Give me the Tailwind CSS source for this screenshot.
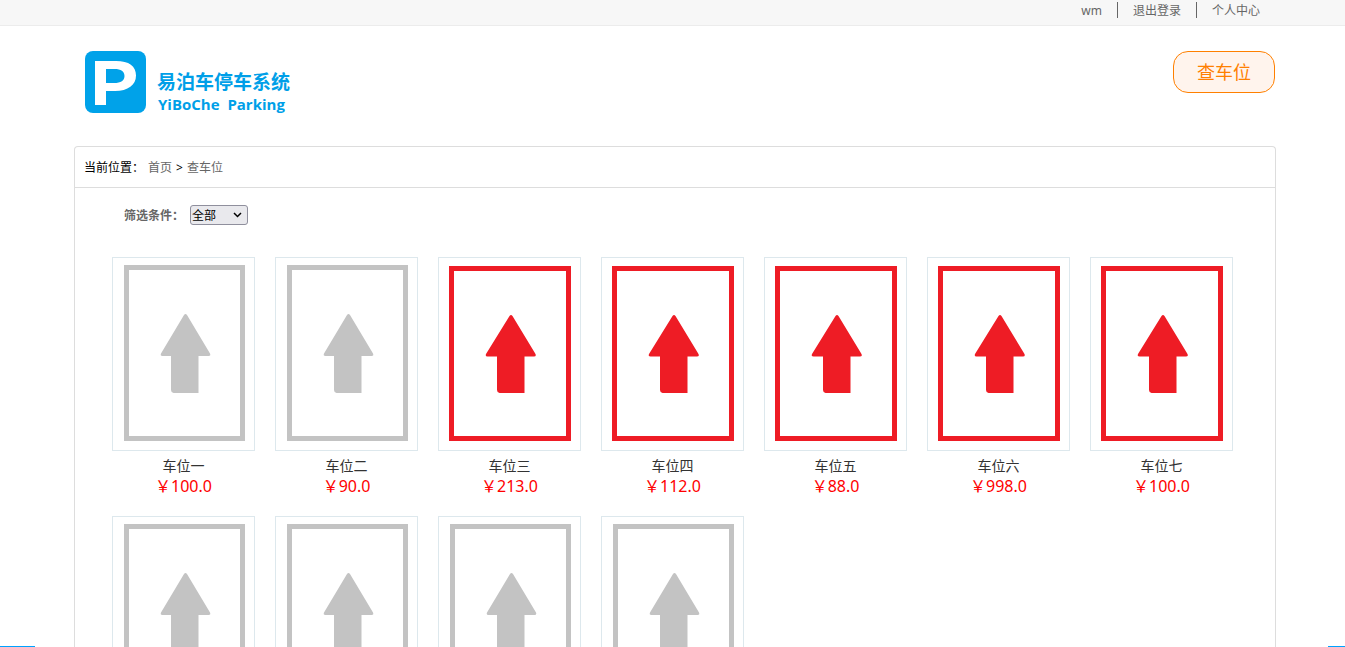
<!DOCTYPE html>
<html lang="zh-CN">
<head>
<meta charset="utf-8">
<meta name="viewport" content="width=device-width, initial-scale=1">
<title>易泊车停车系统</title>
<script src="https://cdn.jsdelivr.net/npm/@tailwindcss/browser@4"></script>
</head>
<body class="min-h-screen bg-white font-['Noto_Sans','Noto_Sans_CJK_SC',sans-serif] text-xs text-black">
<svg class="hidden" aria-hidden="true">
  <symbol id="free" viewBox="0 0 141 192">
    <rect x="13.5" y="9.5" width="116" height="171" fill="none" stroke="#c3c3c3" stroke-width="5"/>
    <path d="M71 57q1.500-2 3 0L97 95.500q1 2.500-1.500 2.500H85.500v37H60.500q-2.500-.5-2.500-3V98H49.500q-2.500 0-1.500-2.500z" fill="#c3c3c3"/>
  </symbol>
  <symbol id="taken" viewBox="0 0 141 192">
    <rect x="12.500" y="10.500" width="117" height="170" fill="none" stroke="#ee1c25" stroke-width="5"/>
    <path d="M70.500 58q1.500-2 3 0L96.500 96q1 2.500-1.500 2.500H85.500V135H60.500q-2.500-.5-2.500-3V98.500H48.500q-2.500 0-1.500-2.500z" fill="#ee1c25"/>
  </symbol>
</svg>

<div class="h-[26px] border-b border-[#ececec] bg-[#f7f7f7] pl-[5px]">
  <nav class="mx-auto flex max-w-[1202px] justify-end pt-0.5 pr-px leading-[18px] text-[#666]">
    <a href="#" class="h-4 border-r border-[#666] px-[15px]">wm</a>
    <a href="#" class="h-4 border-r border-[#666] px-[15px]">退出登录</a>
    <a href="#" class="h-4 px-[15px]">个人中心</a>
  </nav>
</div>

<div class="pl-[5px]">
  <header class="mx-auto flex h-[120px] max-w-[1202px] items-start justify-between pt-[25px]">
    <a href="#" class="flex pl-[11px] text-[#009fe8]" aria-label="易泊车停车系统">
      <svg class="h-[62px] w-[61px] shrink-0" viewBox="0 0 61 62">
        <rect width="61" height="62" rx="8" fill="#00a2e9"/>
        <path fill="#fff" fill-rule="evenodd" d="M10 10H31C44 10 51 15 51 24.500C51 34 43 40 30 40H21V54H10zM21 18V32H29C36 32 39.500 29.500 39.500 25C39.500 20.500 36 18 29.500 18z"/>
      </svg>
      <span class="block pl-[11px] pt-[20px] font-bold">
        <span class="block text-[19px] leading-[22px]">易泊车停车系统</span>
        <span class="block whitespace-pre pl-px text-[15px] font-['Open_Sans','Noto_Sans',sans-serif] leading-[22px]">YiBoChe  Parking</span>
      </span>
    </a>
    <button type="button" class="mr-px h-[42px] w-[102px] rounded-[15px] border border-[#ff8000] bg-[#fff4ed] text-lg text-[#ff8000]">查车位</button>
  </header>

  <main class="mx-auto max-w-[1202px] rounded-t border border-b-0 border-[#ddd]">
    <div class="flex h-[41px] items-center gap-1 border-b border-[#ddd] pt-0.5 pl-[9px]">
      <span>当前位置：</span><a href="#" class="text-[#666]">首页</a><span>&gt;</span><a href="#" class="text-[#666]">查车位</a>
    </div>
    <div class="flex h-[54px] items-center gap-1.5 pl-[49px]">
      <label for="filter" class="pt-0.5 font-bold text-[#666]">筛选条件：</label>
      <div class="relative">
        <select id="filter" class="block h-5 w-[58px] appearance-none rounded-[3px] border border-[#8f8f9d] bg-[#e9e9ed] pt-px pl-px text-xs text-black">
          <option>全部</option><option>空闲</option><option>已占用</option>
        </select>
        <svg class="pointer-events-none absolute top-[7px] right-1.5 h-[6px] w-[9px]" viewBox="0 0 9 6" fill="none" stroke="#000" stroke-width="1.500"><path d="M1 1l3.500 3.500L8 1"/></svg>
      </div>
    </div>
    <ul id="spots" class="flex flex-wrap gap-x-5 gap-y-[18px] px-[37px] pt-[15px]"></ul>
  </main>
</div>

<div class="fixed bottom-0 left-0 h-px w-[35px] bg-[#00a2ff]"></div>
<div class="fixed right-0 bottom-0 h-px w-[17px] bg-[#00a2ff]"></div>

<script>
const spots = [
  ["车位一", "100.0", "free"], ["车位二", "90.0", "free"], ["车位三", "213.0", "taken"],
  ["车位四", "112.0", "taken"], ["车位五", "88.0", "taken"], ["车位六", "998.0", "taken"],
  ["车位七", "100.0", "taken"], ["车位八", "100.0", "free"], ["车位九", "100.0", "free"],
  ["车位十", "100.0", "free"], ["车位十一", "100.0", "free"]
];
document.getElementById("spots").innerHTML = spots.map(([name, price, state]) => `
  <li class="w-[143px] text-center">
    <a href="#" class="block text-[#333]">
      <span class="block border border-[#dde8ed]"><svg class="block h-[192px] w-full" viewBox="0 0 141 192" aria-hidden="true"><use href="#${state}"/></svg></span>
      <span class="block pt-[5px] text-sm leading-5">${name}</span>
    </a>
    <p class="pb-0.5 text-base leading-5 text-[#f00]">￥${price}</p>
  </li>`).join("");
</script>
</body>
</html>
